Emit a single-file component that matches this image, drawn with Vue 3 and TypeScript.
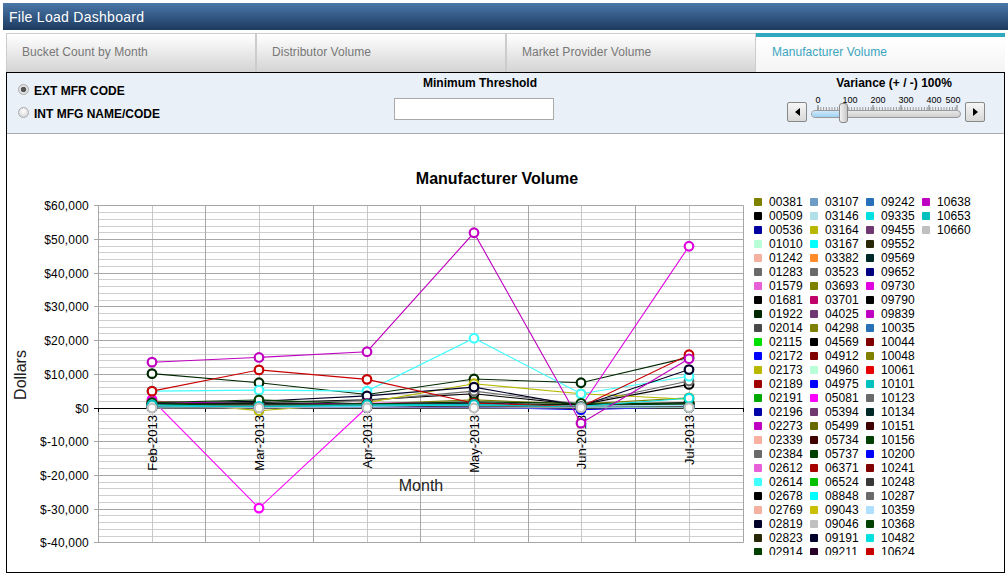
<script setup lang="ts">
type Row = [string, string];
const legend: Row[] = [
  ['00381','#808000'],['00509','#000000'],['00536','#0000a0'],['01010','#b8ffd8'],['01242','#f4b0a0'],['01283','#6a6a6a'],['01579','#e860d8'],['01681','#000000'],['01922','#002800'],['02014','#484848'],['02115','#00e000'],['02172','#0000ff'],['02173','#b8b800'],['02189','#a00000'],['02191','#00a800'],['02196','#0000a8'],['02273','#c000c0'],['02339','#f8b0a0'],['02384','#6a6a6a'],['02612','#e860d8'],['02614','#40ffff'],['02678','#000000'],['02769','#f4b0a0'],['02819','#000028'],['02823','#282808'],['02914','#004000'],
  ['03107','#6c9cc4'],['03146','#b0e0e8'],['03164','#b8b800'],['03167','#00ffff'],['03382','#ff8c28'],['03523','#6a6a6a'],['03693','#808000'],['03701','#c00068'],['04025','#703870'],['04298','#808000'],['04569','#000000'],['04912','#800000'],['04960','#b8ffd8'],['04975','#0000ff'],['05081','#ff00ff'],['05394','#703870'],['05499','#686800'],['05734','#400000'],['05737','#004000'],['06371','#a80000'],['06524','#00c000'],['08848','#00ffff'],['09043','#c8c000'],['09046','#c0c0c0'],['09191','#000028'],['09211','#280028'],
  ['09242','#2870b8'],['09335','#00e0e0'],['09455','#703870'],['09552','#282808'],['09569','#002828'],['09652','#000080'],['09730','#e000e0'],['09790','#000000'],['09839','#c000c0'],['10035','#2870b8'],['10044','#800000'],['10048','#808000'],['10061','#e80000'],['10101','#00c0c0'],['10123','#6a6a6a'],['10134','#002828'],['10151','#400000'],['10156','#004000'],['10200','#0000ff'],['10241','#800000'],['10248','#383838'],['10287','#6a6a6a'],['10359','#b0e0ff'],['10368','#004000'],['10482','#00e0e0'],['10624','#c80000'],
  ['10638','#c000c0'],['10653','#00c0c0'],['10660','#c0c0c0'],
];

const special: Record<string, number[]> = {
  '05081': [2.5, -29.7, 0.2, 1.2, 0.6, 1.4],
  '09730': [1.8, 1.2, 1.4, 1.6, 0.4, 48],
  '10638': [13.6, 15, 16.7, 52, -4.5, 14.6],
  '01922': [10.2, 7.5, 4, 8.6, 7.5, 15],
  '10624': [5, 11.3, 8.5, 1.4, 0.4, 15.8],
  '02614': [5, 5.3, 5, 20.7, 4.2, 9.4],
  '02819': [1.4, 2, 3.6, 6.2, 0.6, 11.4],
  '02173': [2.2, -0.8, 1.6, 7.2, 4.2, 2.6],
  '01283': [1.2, 1.4, 2.2, 5, 1.2, 8],
  '00509': [1, 1.6, 2.4, 4.2, 1, 7],
  '10482': [0.3, 0.5, 0.6, 0.9, 0.5, 2.9],
  '10368': [1.6, 2.4, 1.2, 1.8, 1.4, 1.4],
  '00381': [2, 0.8, 1.2, 2.4, 1.2, 3],
  '10200': [0.2, 0.2, 0.2, 0.3, -0.5, 0.4],
  '10660': [0, 0, 0.1, 0, 0.1, 0.1],
  '10156': [1, 1.2, 0.9, 1.1, 0.8, 1.2],
  '05737': [0.8, 1, 0.7, 0.9, 0.6, 1],
  '02914': [0.6, 0.8, 0.5, 0.7, 0.5, 0.8],
  '09790': [1.2, 1.3, 1.1, 1.3, 1, 1.6],
};

const zeroY = 408;
const pxPerK = 3.37;
const plotLeft = 98;
const plotRight = 743;
const catW = (plotRight - plotLeft) / 6;
const xs: number[] = [152, 259, 367, 474, 581, 689];
const months: string[] = ['Feb-2013', 'Mar-2013', 'Apr-2013', 'May-2013', 'Jun-2013', 'Jul-2013'];
const snap = (v: number): number => Math.floor(v) + 0.5;

function lowValues(i: number): number[] {
  return xs.map((_, j) => {
    const n = Math.abs(Math.sin((i + 1) * 12.9898 + (j + 1) * 78.233) * 43758.5453);
    return (n - Math.floor(n)) * 0.9 + (j === 3 ? 0.3 : 0.1);
  });
}

const series = legend.map(([code, color], i) => {
  const vals = special[code] ?? lowValues(i);
  const pts = vals.map((v, j) => ({ x: xs[j], y: zeroY - v * pxPerK }));
  return { code, color, pts, line: pts.map((p) => `${p.x},${p.y.toFixed(1)}`).join(' ') };
});

const yTicks = [60, 50, 40, 30, 20, 10, 0, -10, -20, -30, -40].map((k) => ({
  y: snap(zeroY - k * pxPerK),
  label: k < 0 ? `$-${Math.abs(k)},000` : k === 0 ? '$0' : `$${k},000`,
}));

const minor: number[] = [];
for (let k = -40; k <= 60; k += 2) if (k % 10 !== 0) minor.push(snap(zeroY - k * pxPerK));
const catBounds = Array.from({ length: 7 }, (_, i) => snap(plotLeft + i * catW));
const plotTop = snap(zeroY - 60 * pxPerK);
const plotBottom = snap(zeroY + 40 * pxPerK);
const rightEdge = catBounds[6];

const tabs = ['Bucket Count by Month', 'Distributor Volume', 'Market Provider Volume', 'Manufacturer Volume'];
const sliderLabels = [
  { x: 7, lx: 7, t: '0' }, { x: 34, lx: 39, t: '100' }, { x: 62, lx: 67, t: '200' }, { x: 90, lx: 95, t: '300' }, { x: 118, lx: 123, t: '400' }, { x: 146, lx: 142, t: '500' },
];
const sliderMinor = Array.from({ length: 50 }, (_, i) => 7 + i * 2.8);
</script>

<template>
  <div class="page">
    <header class="title">File Load Dashboard</header>
    <nav class="tabs">
      <div v-for="(t, i) in tabs" :key="t" class="tab" :class="{ active: i === 3 }">{{ t }}</div>
    </nav>
    <main class="panel">
      <section class="controls">
        <div class="radios">
          <label class="radio-row"><span class="radio on"></span>EXT MFR CODE</label>
          <label class="radio-row"><span class="radio"></span>INT MFG NAME/CODE</label>
        </div>
        <div class="threshold">
          <div class="ctl-title shifted">Minimum Threshold</div>
          <input class="threshold-input" type="text" />
        </div>
        <div class="variance">
          <div class="ctl-title">Variance (+ / -) 100%</div>
          <div class="slider-row">
            <button class="step" type="button"><span class="tri left"></span></button>
            <div class="slider">
              <svg class="scale" width="150" height="22" viewBox="0 0 150 22">
                <text v-for="l in sliderLabels" :key="l.t" :x="l.lx" y="13" text-anchor="middle">{{ l.t }}</text>
                <line v-for="(x, i) in sliderMinor" :key="i" :x1="x" :x2="x" y1="17" y2="20" stroke="#999" stroke-width="1" />
                <line v-for="l in sliderLabels" :key="'m' + l.t" :x1="l.x" :x2="l.x" y1="15" y2="20" stroke="#777" stroke-width="1" />
              </svg>
              <div class="track"><div class="fill"></div></div>
              <div class="thumb"></div>
            </div>
            <button class="step" type="button"><span class="tri right"></span></button>
          </div>
        </div>
      </section>
      <section class="chart-area">
        <svg class="chart" width="741" height="438" viewBox="7 134 741 438">
          <text class="chart-title" x="497" y="184" text-anchor="middle">Manufacturer Volume</text>
          <line v-for="(y, i) in minor" :key="'g' + i" :x1="plotLeft" :x2="rightEdge" :y1="y" :y2="y" stroke="#cfcfcf" />
          <line v-for="x in xs" :key="'v' + x" :x1="x + 0.5" :x2="x + 0.5" :y1="plotTop" :y2="plotBottom" stroke="#c8c8c8" />
          <line v-for="x in catBounds" :key="'b' + x" :x1="x" :x2="x" :y1="plotTop" :y2="plotBottom" stroke="#a6a6a6" />
          <template v-for="t in yTicks" :key="t.label">
            <line :x1="plotLeft - 4" :x2="rightEdge" :y1="t.y" :y2="t.y" :stroke="t.label === '$0' ? '#000' : '#a6a6a6'" />
            <text class="axis" x="89" :y="t.y + 4" text-anchor="end">{{ t.label }}</text>
          </template>
          <line v-for="x in catBounds" :key="'t' + x" :x1="x" :x2="x" :y1="zeroY" :y2="zeroY + 4" stroke="#000" />
          <text v-for="(m, i) in months" :key="m" class="cat" text-anchor="end" :transform="`translate(${xs[i] + 4.5},415) rotate(-90)`">{{ m }}</text>
          <text class="axis-title" x="421" y="491" text-anchor="middle">Month</text>
          <text class="axis-title" text-anchor="middle" transform="translate(26,375) rotate(-90)">Dollars</text>
          <polyline v-for="s in series" :key="'l' + s.code" :points="s.line" fill="none" :stroke="s.color" stroke-width="1.1" />
          <template v-for="s in series" :key="'m' + s.code">
            <circle v-for="p in s.pts" :key="p.x" :cx="p.x" :cy="p.y" r="4.3" fill="#fff" :stroke="s.color" stroke-width="2.2" />
          </template>
        </svg>
        <div class="legend">
          <div v-for="r in legend" :key="r[0]" class="legend-item">
            <span class="swatch" :style="{ background: r[1] }"></span>{{ r[0] }}
          </div>
        </div>
      </section>
    </main>
  </div>
</template>

<style>
html, body { margin: 0; background: #fff; overflow: hidden; }
</style>

<style scoped>
.page {
  width: 1008px;
  height: 577px;
  box-sizing: border-box;
  padding: 3px 3px 4px 3px;
  display: flex;
  flex-direction: column;
  font-family: "Liberation Sans", Arial, sans-serif;
  color: #000;
}
.title {
  height: 27px;
  margin-right: -3px;
  flex: none;
  box-sizing: border-box;
  padding-left: 6px;
  line-height: 28px;
  font-size: 14px;
  letter-spacing: 0.28px;
  color: #fff;
  background: linear-gradient(#4a77a8, #1c3a60);
}
.tabs {
  flex: none;
  display: flex;
  height: 39px;
  margin: 3px 0 0 3px;
  width: 999px;
}
.tab {
  flex: none;
  width: 250px;
  box-sizing: border-box;
  padding-left: 15px;
  line-height: 36px;
  font-size: 12px;
  letter-spacing: 0.05px;
  color: #777;
  border-top: 1px solid #ccc;
  border-left: 1px solid #ccc;
  border-right: 1px solid #ccc;
  background: linear-gradient(#fff, #d4d4d4);
}
.tab.active {
  width: 249px;
  color: #3aa5bf;
  border-top: 4px solid #2ea9bd;
  border-left: 0;
  border-right: 0;
  padding-left: 16px;
  line-height: 30px;
  background: linear-gradient(#fff, #f4f4f4);
}
.panel {
  flex: 1;
  margin-left: 3px;
  width: 999px;
  box-sizing: border-box;
  border: 1px solid #000;
  display: flex;
  flex-direction: column;
  position: relative;
  overflow: hidden;
}
.controls {
  flex: none;
  height: 61px;
  box-sizing: border-box;
  background: #e9f0f8;
  border-bottom: 1px solid #aaa;
  position: relative;
  display: grid;
  grid-template-columns: 387px 160px 1fr;
  font-size: 12px;
  font-weight: bold;
}
.radios {
  padding: 10px 0 0 11px;
  display: flex;
  flex-direction: column;
  gap: 7px;
}
.radio-row {
  display: flex;
  align-items: center;
  height: 16px;
  gap: 5px;
}
.radio {
  width: 11px;
  height: 11px;
  border-radius: 50%;
  border: 1px solid #aaa;
  box-sizing: border-box;
  background: radial-gradient(circle at 50% 35%, #fff, #ccc);
  margin-top: -4px;
  flex: none;
}
.radio.on {
  background: radial-gradient(circle, #555 0 2.4px, #ddd 3px, #eee);
}
.threshold {
  padding-top: 3px;
  display: flex;
  flex-direction: column;
  align-items: center;
}
.ctl-title {
  height: 14px;
  line-height: 14px;
  text-align: center;
  white-space: nowrap;
}
.ctl-title.shifted { margin-left: 12px; }
.threshold-input {
  width: 160px;
  height: 22px;
  box-sizing: border-box;
  margin-top: 8px;
  border: 1px solid #aaa;
  background: #fff;
  padding: 0;
}
.variance {
  padding: 3px 19px 0 0;
  display: flex;
  flex-direction: column;
  align-items: flex-end;
}
.variance .ctl-title { width: 198px; margin-right: -8px; }
.slider-row {
  display: flex;
  align-items: flex-start;
  gap: 4px;
  height: 40px;
}
.step {
  width: 20px;
  height: 20px;
  margin-top: 12px;
  padding: 0;
  box-sizing: border-box;
  border: 1px solid #888;
  border-radius: 2px;
  background: linear-gradient(#f6f6f6, #d8d8d8);
  display: flex;
  align-items: center;
  justify-content: center;
}
.tri { width: 0; height: 0; border-top: 4px solid transparent; border-bottom: 4px solid transparent; }
.tri.left { border-right: 5px solid #000; }
.tri.right { border-left: 5px solid #000; }
.slider { position: relative; width: 150px; height: 40px; }
.scale { position: absolute; left: 0; top: 0; }
.scale text { font: 9px "Liberation Sans", Arial, sans-serif; fill: #000; }
.track {
  position: absolute;
  left: 0;
  top: 20px;
  width: 150px;
  height: 8px;
  box-sizing: border-box;
  border: 1px solid #999;
  border-radius: 4px;
  background: linear-gradient(#e8e8e8, #cfcfcf);
  overflow: hidden;
}
.fill { width: 28px; height: 100%; background: linear-gradient(#cfe8fa, #9fd2f2); }
.thumb {
  position: absolute;
  left: 28px;
  top: 13px;
  width: 9px;
  height: 20px;
  box-sizing: border-box;
  border: 1px solid #888;
  border-radius: 3px;
  background: linear-gradient(90deg, #f2f2f2, #c8c8c8);
}
.chart-area {
  flex: 1;
  display: flex;
  min-height: 0;
  background: #fff;
}
.chart { display: block; flex: none; }
.chart-title { font: bold 16px "Liberation Sans", Arial, sans-serif; }
.axis { font: 12px "Liberation Sans", Arial, sans-serif; letter-spacing: 0.2px; fill: #000; }
.cat { font: 13px "Liberation Sans", Arial, sans-serif; fill: #000; }
.axis-title { font: 16px "Liberation Sans", Arial, sans-serif; fill: #222; }
.legend {
  margin: 61px 0 0 6px;
  height: 360px;
  overflow: hidden;
  display: grid;
  grid-auto-flow: column;
  grid-template-rows: repeat(26, 14px);
  grid-auto-columns: 56px;
  font-size: 12px;
  letter-spacing: 0.1px;
  align-content: start;
}
.legend-item {
  display: flex;
  align-items: center;
  height: 14px;
  line-height: 14px;
  white-space: nowrap;
}
.swatch {
  width: 8px;
  height: 8px;
  margin-right: 7px;
  flex: none;
  border-radius: 1px;
}
</style>
